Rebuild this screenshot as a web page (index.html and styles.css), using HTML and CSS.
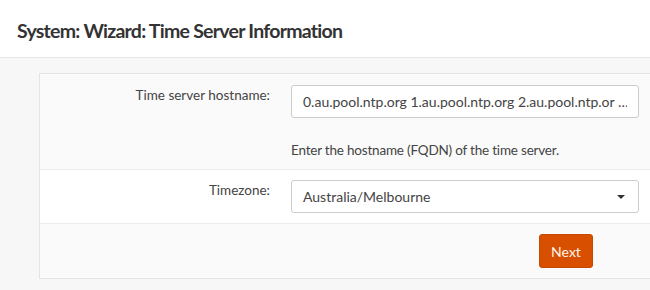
FILE: index.html
```html
<!DOCTYPE html>
<html lang="en">
<head>
    <meta charset="UTF-8">
    <title>System: Wizard: Time Server Information</title>
    <link rel="stylesheet" href="styles.css">
</head>
<body>
<header class="page-header">
    <h1>System: Wizard: Time Server Information</h1>
</header>
<main class="content">
    <div class="wizard">
        <div class="row row-grey">
            <label class="row-label" for="timeservers">Time server hostname:</label>
            <div class="row-field">
                <input type="text" id="timeservers" class="form-control" value="0.au.pool.ntp.org 1.au.pool.ntp.org 2.au.pool.ntp.or …">
                <div class="help">Enter the hostname (FQDN) of the time server.</div>
            </div>
        </div>
        <div class="row row-white">
            <label class="row-label" for="timezone">Timezone:</label>
            <div class="row-field">
                <div class="select">
                    <span>Australia/Melbourne</span>
                    <span class="caret"></span>
                </div>
            </div>
        </div>
        <div class="row row-grey footer">
            <div></div>
            <div class="row-field">
                <button class="btn-primary">Next</button>
            </div>
        </div>
    </div>
</main>
</body>
</html>
```

FILE: styles.css
```css
html, body {
    margin: 0;
    padding: 0;
    height: 100%;
    overflow: hidden;
}
body {
    background: #f7f7f7;
    font-family: Lato, "Noto Sans", sans-serif;
    font-size: 14px;
    color: #333;
}
.page-header {
    background: #fff;
    height: 58px;
    border-bottom: 1px solid #e6e6e6;
    box-sizing: border-box;
    padding: 18px 0 0 17px;
}
.page-header h1 {
    margin: 0;
    font-size: 19.5px;
    font-weight: 700;
    letter-spacing: -0.75px;
    color: #333;
    line-height: 26px;
}
.content {
    padding: 15px 0 0 39px;
}
.wizard {
    width: 640px;
    border: 1px solid #e4e4e4;
    background: #fafafa;
}
.row {
    display: grid;
    grid-template-columns: 251px 348px;
    border-bottom: 1px solid #ececec;
}
.row:last-child {
    border-bottom: none;
}
.row-grey {
    background: #fafafa;
}
.row-white {
    background: #fff;
}
.row-label {
    text-align: right;
    padding-right: 21px;
    color: #444;
    font-size: 13.5px;
}
.row-grey .row-label {
    padding-top: 13px;
}
.row-white .row-label {
    padding-top: 12px;
}
.row-grey .row-field {
    padding: 11px 0 9px;
}
.row-white .row-field {
    padding: 10px 0 10px;
}
.form-control, .select {
    box-sizing: border-box;
    width: 348px;
    height: 33px;
    border: 1px solid #ccc;
    border-radius: 3px;
    background: #fff;
    font-family: inherit;
    font-size: 14px;
    color: #444;
    padding: 0 11px;
    margin: 0;
}
.help {
    margin-top: 22px;
    color: #444;
    line-height: 20px;
    font-size: 13.5px;
    letter-spacing: -0.2px;
}
.select {
    display: flex;
    align-items: center;
    justify-content: space-between;
}
.caret {
    width: 0;
    height: 0;
    border-left: 4px solid transparent;
    border-right: 4px solid transparent;
    border-top: 4px solid #333;
    margin-right: 2px;
}
.footer .row-field {
    display: flex;
    justify-content: flex-end;
    padding: 10px 46px 10px 0;
}
.btn-primary {
    background: #d94f00;
    border: 1px solid #c84800;
    border-radius: 3px;
    color: #fdf3ea;
    font-family: inherit;
    font-size: 14px;
    height: 34px;
    width: 54px;
    padding: 0;
}
```
